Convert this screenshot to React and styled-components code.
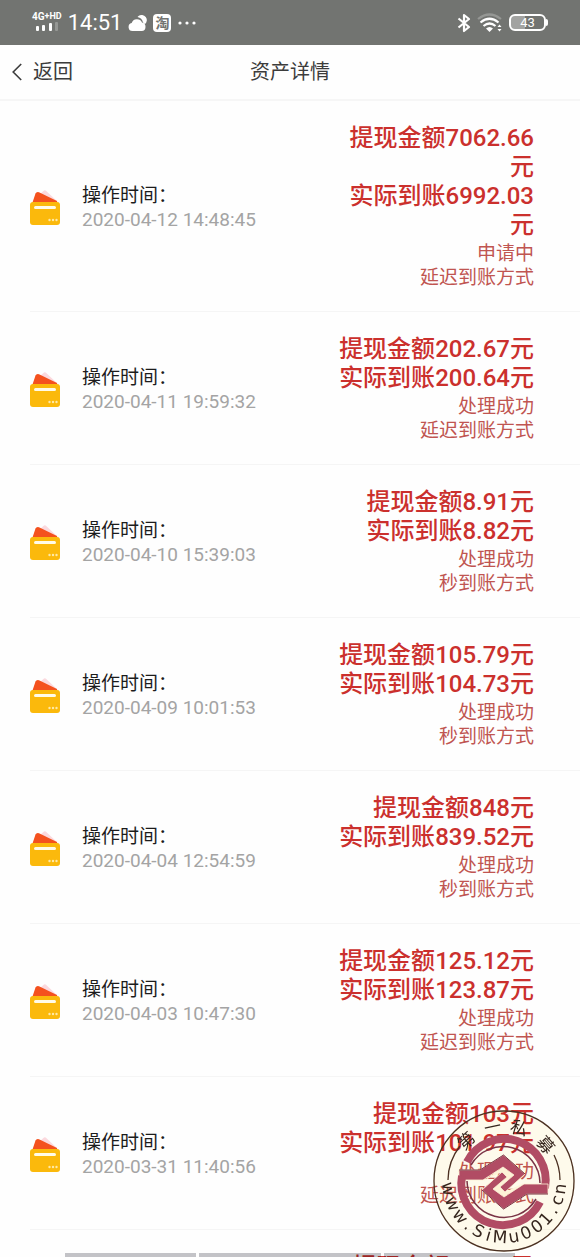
import React from 'react';
import styled, { createGlobalStyle, css } from 'styled-components';

const GlobalStyle = createGlobalStyle`
  * { box-sizing: border-box; }
  body {
    margin: 0;
    background: #fff;
    font-family: Roboto, "Noto Sans CJK SC", sans-serif;
  }
`;

const Page = styled.div`
  height: 100vh;
  display: flex;
  flex-direction: column;
  overflow: hidden;
  background: #fefefe;
`;

const StatusBar = styled.div`
  flex: none;
  height: 45px;
  padding: 0 34px 0 32px;
  display: flex;
  align-items: center;
  justify-content: space-between;
  background: #727471;
  color: #fff;
`;

const StatusGroup = styled.div`
  display: flex;
  align-items: center;
  gap: 6px;
`;

const Network = styled.div`
  display: flex;
  flex-direction: column;
  align-items: center;
  padding-bottom: 4px;
  font-size: 10px;
  font-weight: 700;
  line-height: 11px;
  white-space: nowrap;

  small { font-size: 9px; vertical-align: 1px; }
`;

const Clock = styled.span`
  font-size: 22px;
  line-height: 26px;
`;

const TaoBadge = styled.span`
  width: 18px;
  height: 18px;
  border-radius: 4px;
  background: #fff;
  color: #727471;
  font-size: 14px;
  font-weight: 700;
  line-height: 18px;
  text-align: center;
`;

const Battery = styled.div`
  position: relative;
  width: 37px;
  height: 17px;
  border: 2px solid #fff;
  border-radius: 6px;
  background: linear-gradient(to right, #a2a3a1 43%, transparent 43%);
  font-size: 13px;
  line-height: 14px;
  text-align: center;

  &::after {
    content: '';
    position: absolute;
    right: -4px;
    top: 3px;
    width: 2px;
    height: 7px;
    border-radius: 0 2px 2px 0;
    background: #fff;
  }
`;

const Header = styled.header`
  flex: none;
  height: 56px;
  padding: 0 12px;
  display: grid;
  grid-template-columns: 1fr auto 1fr;
  align-items: center;
  border-bottom: 2px solid #f6f6f6;
  color: #3c3c3c;
`;

const BackButton = styled.button`
  justify-self: start;
  display: flex;
  align-items: center;
  gap: 11px;
  padding: 0;
  border: 0;
  background: none;
  color: inherit;
  font: inherit;
  font-size: 20px;
  line-height: 28px;
`;

const Title = styled.h1`
  margin: 0;
  font-size: 20px;
  font-weight: 400;
  line-height: 28px;
`;

const List = styled.ul`
  flex: 1;
  min-height: 0;
  margin: 0;
  padding: 0 0 0 30px;
  list-style: none;
  overflow-y: auto;
  scrollbar-width: none;
`;

const Row = styled.li`
  display: flex;
  align-items: center;
  padding: 23px 46px 21px 0;
  border-bottom: 1px solid #f5f5f5;
`;

const Operation = styled.div`
  flex: 1;
  padding: 2px 0 0 22px;
  font-size: 19px;
  line-height: 24px;
`;

const Label = styled.div`
  color: #1c1c1c;
`;

const Time = styled.time`
  display: block;
  color: #a4a4a4;
`;

const Summary = styled.div`
  width: 200px;
  text-align: right;
`;

const Amount = styled.div`
  color: #cb302d;
  font-size: 24px;
  font-weight: 500;
  line-height: 29px;
`;

const Notes = styled.div`
  padding-top: 2px;
  color: #c05551;
  font-size: 19px;
  line-height: 24px;
`;

const Wallet = styled.svg`
  flex: none;
  width: 30px;
  height: 36px;
`;

const GestureBars = styled.div`
  position: fixed;
  left: 65px;
  right: 65px;
  bottom: 0;
  height: 4px;
  display: grid;
  grid-template-columns: 131fr 182fr 131fr;
  gap: 3px;
  mix-blend-mode: multiply;

  span { background: #c4c4c8; }
`;

const sealBox = css`
  position: fixed;
  right: 5px;
  bottom: 5px;
  width: 142px;
  height: 142px;
`;

const SealPaper = styled.div`
  ${sealBox}
  border-radius: 50%;
  background: #fffbec;
  mix-blend-mode: multiply;
`;

const SealArt = styled.svg`
  ${sealBox}
`;

function SignalIcon() {
  return (
    <svg width="24" height="9" viewBox="0 0 24 9" fill="#fff" aria-hidden="true">
      <rect x="1" y="4" width="3" height="5" rx="1" />
      <rect x="7" y="3" width="3" height="6" rx="1" />
      <rect x="14" y="1" width="3" height="8" rx="1" />
      <rect x="20" y="0" width="3" height="9" rx="1" opacity="0.25" />
    </svg>
  );
}

function CloudIcon() {
  return (
    <svg width="19" height="18" viewBox="0 0 19 18" fill="#fff" aria-hidden="true">
      <path d="M4.500 17a4 4 0 0 1-.8-7.900A5.500 5.500 0 0 1 14 8.500a4.300 4.300 0 0 1-.3 8.500z" />
      <path d="M10.500 2a5 5 0 0 1 6.300 8.200A6 6 0 0 0 15 8.500 7 7 0 0 0 9.500 3z" />
    </svg>
  );
}

function DotsIcon() {
  return (
    <svg width="20" height="6" viewBox="0 0 20 6" fill="#fff" aria-hidden="true">
      <circle cx="3" cy="3" r="1.600" />
      <circle cx="10" cy="3" r="1.600" />
      <circle cx="17" cy="3" r="1.600" />
    </svg>
  );
}

function BluetoothIcon() {
  return (
    <svg width="14" height="20" viewBox="0 0 14 20" fill="none" stroke="#fff" strokeWidth="2.200" strokeLinejoin="round" aria-hidden="true">
      <path d="M1.500 5.500 12 14l-5 4V2l5 4-10.500 8.500" />
    </svg>
  );
}

function WifiIcon() {
  return (
    <svg width="26" height="20" viewBox="0 0 26 20" fill="none" stroke="#fff" strokeWidth="2.200" aria-hidden="true">
      <path d="M1 6Q12.500-3 24 6" opacity="0.25" />
      <path d="M3.500 9.500Q12.500 2 21.500 9.500" />
      <path d="M6.500 13Q12.500 8 18.500 13" />
      <path d="M9 15.500q3.500-3 7 0L12.500 19z" fill="#fff" stroke="none" />
      <path d="m20.500 14 2-2.500 2 2.500zm0 2 2 2.500 2-2.500z" fill="#fff" stroke="none" />
    </svg>
  );
}

function ChevronIcon() {
  return (
    <svg width="10" height="18" viewBox="0 0 10 18" fill="none" stroke="#3c3c3c" strokeWidth="1.600" aria-hidden="true">
      <path d="M9.200 1 1.200 9l8 8" />
    </svg>
  );
}

function WalletIcon() {
  return (
    <Wallet viewBox="0 0 30 36" aria-hidden="true">
      <path d="M9 6 14 1.500q1-.7 2 .2L29 14H12z" fill="#fbd9de" />
      <path d="M5.500 4.500q1-2.200 3.500-1.300L27 12v3H2z" fill="#f4511e" />
      <rect y="13" width="30" height="23" rx="3" fill="#fbb90c" />
      <rect x="4" y="17" width="22" height="3" rx="1.500" fill="#fffbe8" />
      <g fill="#ffe9a6">
        <circle cx="19.500" cy="31" r="1.200" />
        <circle cx="23" cy="31" r="1.200" />
        <circle cx="26.500" cy="31" r="1.200" />
      </g>
    </Wallet>
  );
}

const sealName = [['第', -43], ['一', -12], ['私', 16], ['募', 49]];
const sealSite = [
  ['w', 82], ['w', 66], ['w', 51], ['.', 39], ['S', 27], ['i', 16], ['M', 4],
  ['u', -10], ['0', -23], ['0', -36], ['1', -48], ['.', -59], ['c', -70], ['n', -82],
];

function SealKnot() {
  return (
    <>
      <path d="M34 52A41.500 41.500 0 0 1 112 78" fill="none" stroke="#b14c64" strokeWidth="8" />
      <path d="M38 55A37 37 0 0 1 107 73" fill="none" stroke="#7a3446" strokeWidth="1.500" />
      <path d="M26 60H47L70.500 45 92 64 72 82 67 77 81 65 70 57 50 70H26z" fill="#b14c64" stroke="#fdf3d6" strokeWidth="0.800" />
      <path d="M26 60H47L70.500 45 92 64" fill="none" stroke="#7a3446" strokeWidth="1" />
    </>
  );
}

function Seal() {
  return (
    <>
      <SealPaper />
      <SealArt viewBox="0 0 142 142" role="img" aria-label="第一私募 www.SiMu001.cn">
        <g fill="none" stroke="#4b3022" strokeWidth="1.300">
          <circle cx="71" cy="71" r="70" />
          <path d="M15 70A56 56 0 0 1 27 36M127 70A56 56 0 0 0 121 45" />
        </g>
        <path d="M70 57 81 65 67 77 72 82 91 73 71 87 60 79 74 67 69 62 50 71z" fill="#fdf3d6" />
        <SealKnot />
        <g transform="rotate(180 70.500 72)"><SealKnot /></g>
        <g fill="#35251d" textAnchor="middle">
          <g fontFamily="'Noto Sans CJK SC', sans-serif" fontSize="17">
            {sealName.map(([char, angle]) => (
              <text key={char} x="71" y="22" transform={`rotate(${angle} 71 71)`}>{char}</text>
            ))}
          </g>
          <g fontFamily="'DejaVu Sans', sans-serif" fontSize="17">
            {sealSite.map(([char, angle]) => (
              <text key={angle} x="71" y="133" transform={`rotate(${angle} 71 71)`}>{char}</text>
            ))}
          </g>
        </g>
      </SealArt>
    </>
  );
}

const records = [
  { time: '2020-04-12 14:48:45', amount: '7062.66', received: '6992.03', status: '申请中', method: '延迟到账方式' },
  { time: '2020-04-11 19:59:32', amount: '202.67', received: '200.64', status: '处理成功', method: '延迟到账方式' },
  { time: '2020-04-10 15:39:03', amount: '8.91', received: '8.82', status: '处理成功', method: '秒到账方式' },
  { time: '2020-04-09 10:01:53', amount: '105.79', received: '104.73', status: '处理成功', method: '秒到账方式' },
  { time: '2020-04-04 12:54:59', amount: '848', received: '839.52', status: '处理成功', method: '秒到账方式' },
  { time: '2020-04-03 10:47:30', amount: '125.12', received: '123.87', status: '处理成功', method: '延迟到账方式' },
  { time: '2020-03-31 11:40:56', amount: '103', received: '101.97', status: '处理成功', method: '延迟到账方式' },
  { time: '2020-03-30 10:20:36', amount: '98.98', received: '97.99', status: '处理成功', method: '延迟到账方式' },
];

export default function App() {
  return (
    <Page>
      <GlobalStyle />
      <StatusBar>
        <StatusGroup>
          <Network><span>4G<small>+HD</small></span><SignalIcon /></Network>
          <Clock>14:51</Clock>
          <CloudIcon />
          <TaoBadge>淘</TaoBadge>
          <DotsIcon />
        </StatusGroup>
        <StatusGroup>
          <BluetoothIcon />
          <WifiIcon />
          <Battery>43</Battery>
        </StatusGroup>
      </StatusBar>
      <Header>
        <BackButton type="button"><ChevronIcon />返回</BackButton>
        <Title>资产详情</Title>
      </Header>
      <List>
        {records.map((r) => (
          <Row key={r.time}>
            <WalletIcon />
            <Operation>
              <Label>操作时间：</Label>
              <Time>{r.time}</Time>
            </Operation>
            <Summary>
              <Amount>提现金额{r.amount}元</Amount>
              <Amount>实际到账{r.received}元</Amount>
              <Notes>
                <div>{r.status}</div>
                <div>{r.method}</div>
              </Notes>
            </Summary>
          </Row>
        ))}
      </List>
      <GestureBars><span /><span /><span /></GestureBars>
      <Seal />
    </Page>
  );
}
